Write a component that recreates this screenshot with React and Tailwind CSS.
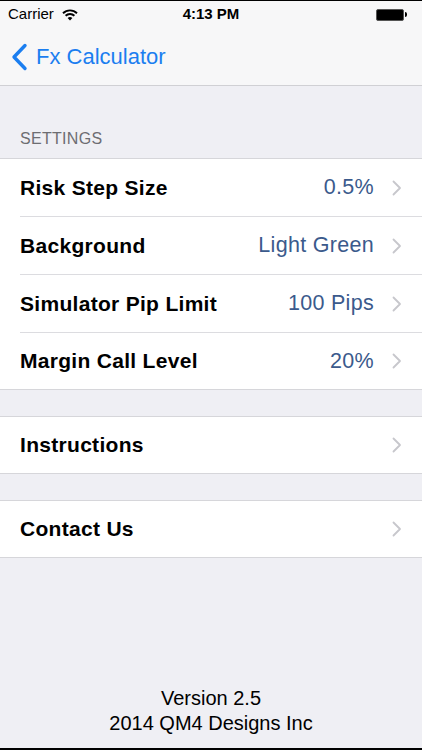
import React from "react";

const Chevron = () => (
  <svg width="10" height="16" viewBox="0 0 10 16" className="shrink-0">
    <path d="M1.5 1.5 L8 8 L1.5 14.5" fill="none" stroke="#c7c7cc" strokeWidth="1.8" strokeLinecap="round" strokeLinejoin="round" />
  </svg>
);

const Row = ({ label, value, last }) => (
  <div className={`flex items-center pl-5 bg-white ${last ? "h-[56px]" : "h-[58px]"}`}>
    <div className={`flex items-center h-full flex-1 pr-5 ${last ? "" : "border-b border-[#dcdce0]"}`}>
      <span className="flex-1 text-[21px] font-bold text-black tracking-[0.3px]">{label}</span>
      {value && <span className="text-[21.5px] text-[#3b5a8c] mr-[18px] tracking-[0.3px]">{value}</span>}
      <Chevron />
    </div>
  </div>
);

const Group = ({ children }) => (
  <div className="border-y border-[#d6d6da]">{children}</div>
);

export default function App() {
  return (
    <div
      className="w-[422px] h-[750px] flex flex-col bg-[#efeff4] border-t border-b-2 border-black overflow-hidden"
      style={{ fontFamily: '"Liberation Sans", Arial, sans-serif' }}
    >
      <div className="bg-[#f7f7f8] border-b border-[#d0d0d4]">
        <div className="relative flex items-center h-[27px] px-2 text-[15px] text-black">
          <span>Carrier</span>
          <svg width="16" height="12" viewBox="0 0 16 12" className="ml-[8px]">
            <path d="M1 4.2 A10 10 0 0 1 15 4.2" fill="none" stroke="#000" strokeWidth="1.9" />
            <path d="M3.6 6.8 A6.3 6.3 0 0 1 12.4 6.8" fill="none" stroke="#000" strokeWidth="1.9" />
            <path d="M8 11.5 L5.6 9.1 A3.4 3.4 0 0 1 10.4 9.1 Z" fill="#000" />
          </svg>
          <span className="absolute left-0 right-0 text-center font-bold pointer-events-none">4:13 PM</span>
          <div className="ml-auto flex items-center mr-[7px]">
            <div className="w-[28px] h-[12px] bg-black rounded-[2px] border border-[#555]" />
            <div className="w-[2px] h-[5px] bg-black ml-[1px] rounded-r-sm" />
          </div>
        </div>
        <div className="flex items-center h-[57px] pl-[11px] text-[#1b7ef0]">
          <svg width="17" height="28" viewBox="0 0 17 28">
            <path d="M14 2.5 L3 14 L14 25.5" fill="none" stroke="#1b7ef0" strokeWidth="3.4" strokeLinecap="round" strokeLinejoin="round" />
          </svg>
          <span className="ml-[8px] text-[22px]">Fx Calculator</span>
        </div>
      </div>

      <div className="pl-5 pt-[41px] pb-[7px] text-[16px] text-[#6d6d72] tracking-[0.3px]">SETTINGS</div>
      <Group>
        <Row label="Risk Step Size" value="0.5%" />
        <Row label="Background" value="Light Green" />
        <Row label="Simulator Pip Limit" value="100 Pips" />
        <Row label="Margin Call Level" value="20%" last />
      </Group>

      <div className="h-[26px]" />
      <Group>
        <Row label="Instructions" last />
      </Group>

      <div className="h-[26px]" />
      <Group>
        <Row label="Contact Us" last />
      </Group>

      <div className="mt-auto mb-[12px] flex flex-col items-center text-[20px] leading-[25px] text-black">
        <span>Version 2.5</span>
        <span>2014 QM4 Designs Inc</span>
      </div>
    </div>
  );
}
